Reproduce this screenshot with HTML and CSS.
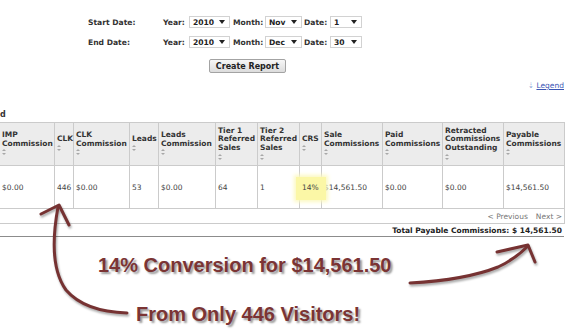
FILE: index.html
```html
<!DOCTYPE html>
<html lang="en">
<head>
    <meta charset="UTF-8">
    <meta name="viewport" content="width=device-width, initial-scale=1.0">
    <title>Commission Report</title>
    <link rel="stylesheet" href="styles.css">
</head>

<body>
<div class="page">
    <form class="report-form">
        <div class="date-row">
            <span class="row-label">Start Date:</span>
            <span class="lbl lbl-year">Year:</span>
            <span class="select sel-year">2010<i class="caret"></i></span>
            <span class="lbl lbl-month">Month:</span>
            <span class="select sel-month">Nov<i class="caret"></i></span>
            <span class="lbl lbl-date">Date:</span>
            <span class="select sel-date">1<i class="caret"></i></span>
        </div>
        <div class="date-row">
            <span class="row-label">End Date:</span>
            <span class="lbl lbl-year">Year:</span>
            <span class="select sel-year">2010<i class="caret"></i></span>
            <span class="lbl lbl-month">Month:</span>
            <span class="select sel-month">Dec<i class="caret"></i></span>
            <span class="lbl lbl-date">Date:</span>
            <span class="select sel-date">30<i class="caret"></i></span>
        </div>
        <button type="button" class="create-btn">Create Report</button>
    </form>

    <div class="legend-row"><span class="legend-arrow">&#8675;</span> <a href="#legend">Legend</a></div>

    <div class="section-title">d</div>

    <div class="results">
        <table class="report-table">
            <colgroup>
                <col class="w55"><col class="w19"><col class="w56"><col class="w29">
                <col class="w57"><col class="w42"><col class="w42"><col class="w22">
                <col class="w61"><col class="w60"><col class="w61"><col class="w61">
            </colgroup>
            <thead>
                <tr>
                    <th>IMP<br>Commission<span class="sort"></span></th>
                    <th>CLK<span class="sort"></span></th>
                    <th>CLK<br>Commission<span class="sort"></span></th>
                    <th>Leads<span class="sort"></span></th>
                    <th>Leads<br>Commission<span class="sort"></span></th>
                    <th>Tier 1<br>Referred<br>Sales<span class="sort"></span></th>
                    <th>Tier 2<br>Referred<br>Sales<span class="sort"></span></th>
                    <th>CRS<span class="sort"></span></th>
                    <th>Sale<br>Commissions<span class="sort"></span></th>
                    <th>Paid<br>Commissions<span class="sort"></span></th>
                    <th>Retracted<br>Commissions<br>Outstanding<span class="sort"></span></th>
                    <th>Payable<br>Commissions<span class="sort"></span></th>
                </tr>
            </thead>
            <tbody>
                <tr>
                    <td>$0.00</td>
                    <td>446</td>
                    <td>$0.00</td>
                    <td>53</td>
                    <td>$0.00</td>
                    <td>64</td>
                    <td>1</td>
                    <td class="crs"><span class="highlight"></span><span class="crs-value">14%</span></td>
                    <td>$14,561.50</td>
                    <td>$0.00</td>
                    <td>$0.00</td>
                    <td>$14,561.50</td>
                </tr>
            </tbody>
            <tfoot>
                <tr>
                    <td colspan="12" class="pager"><a href="#prev">&lt; Previous</a><a href="#next" class="next">Next &gt;</a></td>
                </tr>
            </tfoot>
        </table>
        <div class="total">Total Payable Commissions: $ 14,561.50</div>
    </div>

    <p class="callout callout-top">14% Conversion for $14,561.50</p>
    <p class="callout callout-bottom">From Only 446 Visitors!</p>

    <!-- hand drawn arrows laid over the report -->
    <svg class="arrows" width="570" height="332" viewBox="0 0 570 332">
        <path d="M127,313 C97,312 78,304 66,290 C53,272 51,245 58,207"/>
        <path d="M41,214 L59,205 L69,225"/>
        <path d="M410,283 C446,281 478,275 498,267 C513,260 521,253 528,246"/>
        <path d="M497,252 L528,245 L535,262"/>
    </svg>
</div>
</body>
</html>
```

FILE: styles.css
```css
body {
    margin: 0;
    font-family: "DejaVu Sans", Verdana, sans-serif;
    color: #333;
    background: #fff;
}

.page {
    position: relative;
    width: 570px;
    height: 332px;
    overflow: hidden;
}

/* date filters */
.report-form {
    padding: 16px 0 0 88px;
    margin: 0;
}

.date-row {
    display: flex;
    align-items: center;
    height: 12px;
    margin-bottom: 8px;
    font-size: 7.6px;
    font-weight: bold;
    color: #333;
}

.row-label {
    width: 75px;
}

.lbl-year,
.lbl-date {
    width: 26px;
}

.lbl-month {
    width: 32px;
}

.select {
    display: flex;
    align-items: center;
    justify-content: space-between;
    box-sizing: border-box;
    height: 12px;
    padding: 0 4px 0 3px;
    border: 1px solid #d2d2d2;
    background: #fff;
    color: #222;
}

.sel-year {
    width: 41px;
    margin-right: 3px;
}

.sel-month {
    width: 37px;
    margin-right: 2px;
}

.sel-date {
    width: 32px;
}

.caret {
    width: 0;
    height: 0;
    border-left: 3px solid transparent;
    border-right: 3px solid transparent;
    border-top: 4px solid #222;
}

.create-btn {
    display: block;
    box-sizing: border-box;
    width: 77px;
    height: 14px;
    margin: 11px 0 0 121px;
    padding: 0;
    font-family: "DejaVu Sans", Verdana, sans-serif;
    font-size: 8px;
    font-weight: bold;
    color: #222;
    background: linear-gradient(#f7f7f7, #dcdcdc);
    border: 1px solid #a3a3a3;
    border-radius: 2px;
}

.legend-row {
    margin-top: 8px;
    padding-right: 6px;
    text-align: right;
    font-size: 7.5px;
    line-height: 10px;
}

.legend-row a {
    color: #3a55b4;
}

.legend-arrow {
    color: #8aa2d6;
}

.section-title {
    margin-top: 19px;
    margin-bottom: 2px;
    font-size: 8px;
    font-weight: bold;
    line-height: 10px;
}

/* report table */
.results {
    width: 565px;
    margin-left: -1px;
}

.report-table {
    width: 566px;
    border-collapse: collapse;
    table-layout: fixed;
    font-size: 7.5px;
}

.w19 { width: 19px; }
.w22 { width: 22px; }
.w29 { width: 29px; }
.w42 { width: 42px; }
.w55 { width: 55px; }
.w56 { width: 56px; }
.w57 { width: 57px; }
.w60 { width: 60px; }
.w61 { width: 61px; }

.report-table th,
.report-table td {
    border: 1px solid #cbcbcb;
    padding: 0 0 0 2px;
    text-align: left;
    vertical-align: middle;
    white-space: nowrap;
}

.report-table th {
    height: 42px;
    background: #ececec;
    color: #333;
    line-height: 8.7px;
}

.report-table tbody td {
    height: 42px;
    color: #444;
}

.sort {
    display: block;
    position: relative;
    width: 4px;
    height: 8.7px;
}

.sort::before,
.sort::after {
    content: "";
    position: absolute;
    left: 0;
    border-left: 2px solid transparent;
    border-right: 2px solid transparent;
}

.sort::before {
    top: 1px;
    border-bottom: 2px solid #a8a8a8;
}

.sort::after {
    top: 5px;
    border-top: 2px solid #a8a8a8;
}

.crs {
    position: relative;
}

.highlight {
    position: absolute;
    left: -4px;
    top: 11px;
    width: 30px;
    height: 23px;
    background: #fbf7a6;
    box-shadow: 0 0 4px 2px #fcf9c0;
}

.crs-value {
    position: relative;
}

.report-table .pager {
    height: 14px;
    padding-right: 2px;
    text-align: right;
    color: #777;
}

.pager a {
    color: #777;
    text-decoration: none;
}

.pager .next {
    margin-left: 8px;
}

.total {
    padding: 2px 2px 0 0;
    line-height: 10px;
    text-align: right;
    font-size: 7.5px;
    font-weight: bold;
    color: #222;
    border-bottom: 1px solid #8c8c8c;
}

/* annotations */
.callout {
    margin: 0;
    font-family: "Liberation Sans", Arial, sans-serif;
    font-size: 20px;
    font-weight: bold;
    line-height: 20px;
    color: #7b3434;
    text-shadow: 2px 2px 2px rgba(0, 0, 0, 0.4);
}

.callout-top {
    margin-top: 18px;
    padding-left: 98px;
}

.callout-bottom {
    margin-top: 29px;
    padding-left: 136px;
}

.arrows {
    position: absolute;
    top: 0;
    left: 0;
    pointer-events: none;
    filter: drop-shadow(1px 2px 1px rgba(0, 0, 0, 0.35));
}

.arrows path {
    fill: none;
    stroke: #763232;
    stroke-width: 3;
    stroke-linecap: round;
    stroke-linejoin: round;
}
```
